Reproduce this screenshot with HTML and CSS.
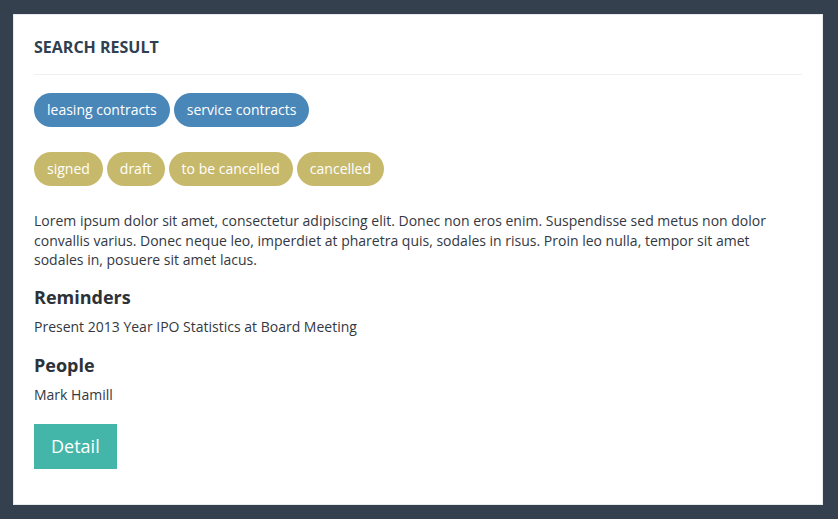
FILE: index.html
```html
<!DOCTYPE html>
<html>
<head>
<meta charset="utf-8">
<link rel="stylesheet" href="styles.css">
</head>
<body>
<div class="panel">
  <div class="panel-title">SEARCH RESULT</div>
  <div class="tags">
    <span class="tag tag-blue">leasing contracts</span>
    <span class="tag tag-blue">service contracts</span>
  </div>
  <div class="tags tags-status">
    <span class="tag tag-gold">signed</span>
    <span class="tag tag-gold">draft</span>
    <span class="tag tag-gold">to be cancelled</span>
    <span class="tag tag-gold">cancelled</span>
  </div>
  <p class="desc">Lorem ipsum dolor sit amet, consectetur adipiscing elit. Donec non eros enim. Suspendisse sed metus non dolor convallis varius. Donec neque leo, imperdiet at pharetra quis, sodales in risus. Proin leo nulla, tempor sit amet sodales in, posuere sit amet lacus.</p>
  <h3 class="section-title section-first">Reminders</h3>
  <p class="section-text">Present 2013 Year IPO Statistics at Board Meeting</p>
  <h3 class="section-title">People</h3>
  <p class="section-text">Mark Hamill</p>
  <a class="btn-detail">Detail</a>
</div>
</body>
</html>
```

FILE: styles.css
```css
html, body {
  margin: 0;
  padding: 0;
}
body {
  background: #35404f;
  font-family: "Open Sans", "DejaVu Sans", sans-serif;
  color: #333842;
  padding: 14px 15px 14px 13px;
}
.panel {
  box-sizing: border-box;
  width: 810px;
  height: 491px;
  background: #ffffff;
  border: 1px solid #e7eaec;
  padding: 0 20px;
}
.panel-title {
  font-size: 16px;
  font-weight: 700;
  color: #2f4050;
  line-height: 20px;
  padding: 22px 0 17px;
  border-bottom: 1px solid #eef0f2;
}
.tags {
  display: flex;
  gap: 4px;
  margin-top: 18px;
}
.tags-status {
  margin-top: 25px;
}
.tag {
  display: inline-block;
  font-size: 14px;
  line-height: 20px;
  padding: 7px 13px;
  border-radius: 17px;
  color: #ffffff;
}
.tag-blue {
  background: #4a87b9;
}
.tag-gold {
  background: #c7b96b;
}
.desc {
  font-size: 14px;
  line-height: 19.5px;
  margin: 25px 0 0;
}
.section-title {
  font-size: 18px;
  font-weight: 700;
  line-height: 24px;
  margin: 16px 0 0;
  color: #2d3138;
}
.section-first {
  margin-top: 15px;
}
.section-text {
  font-size: 14px;
  line-height: 20px;
  margin: 8px 0 0;
}
.btn-detail {
  display: inline-block;
  margin-top: 19px;
  background: #43b5a9;
  color: #ffffff;
  font-size: 18px;
  line-height: 25px;
  padding: 10px 17px;
}
```
